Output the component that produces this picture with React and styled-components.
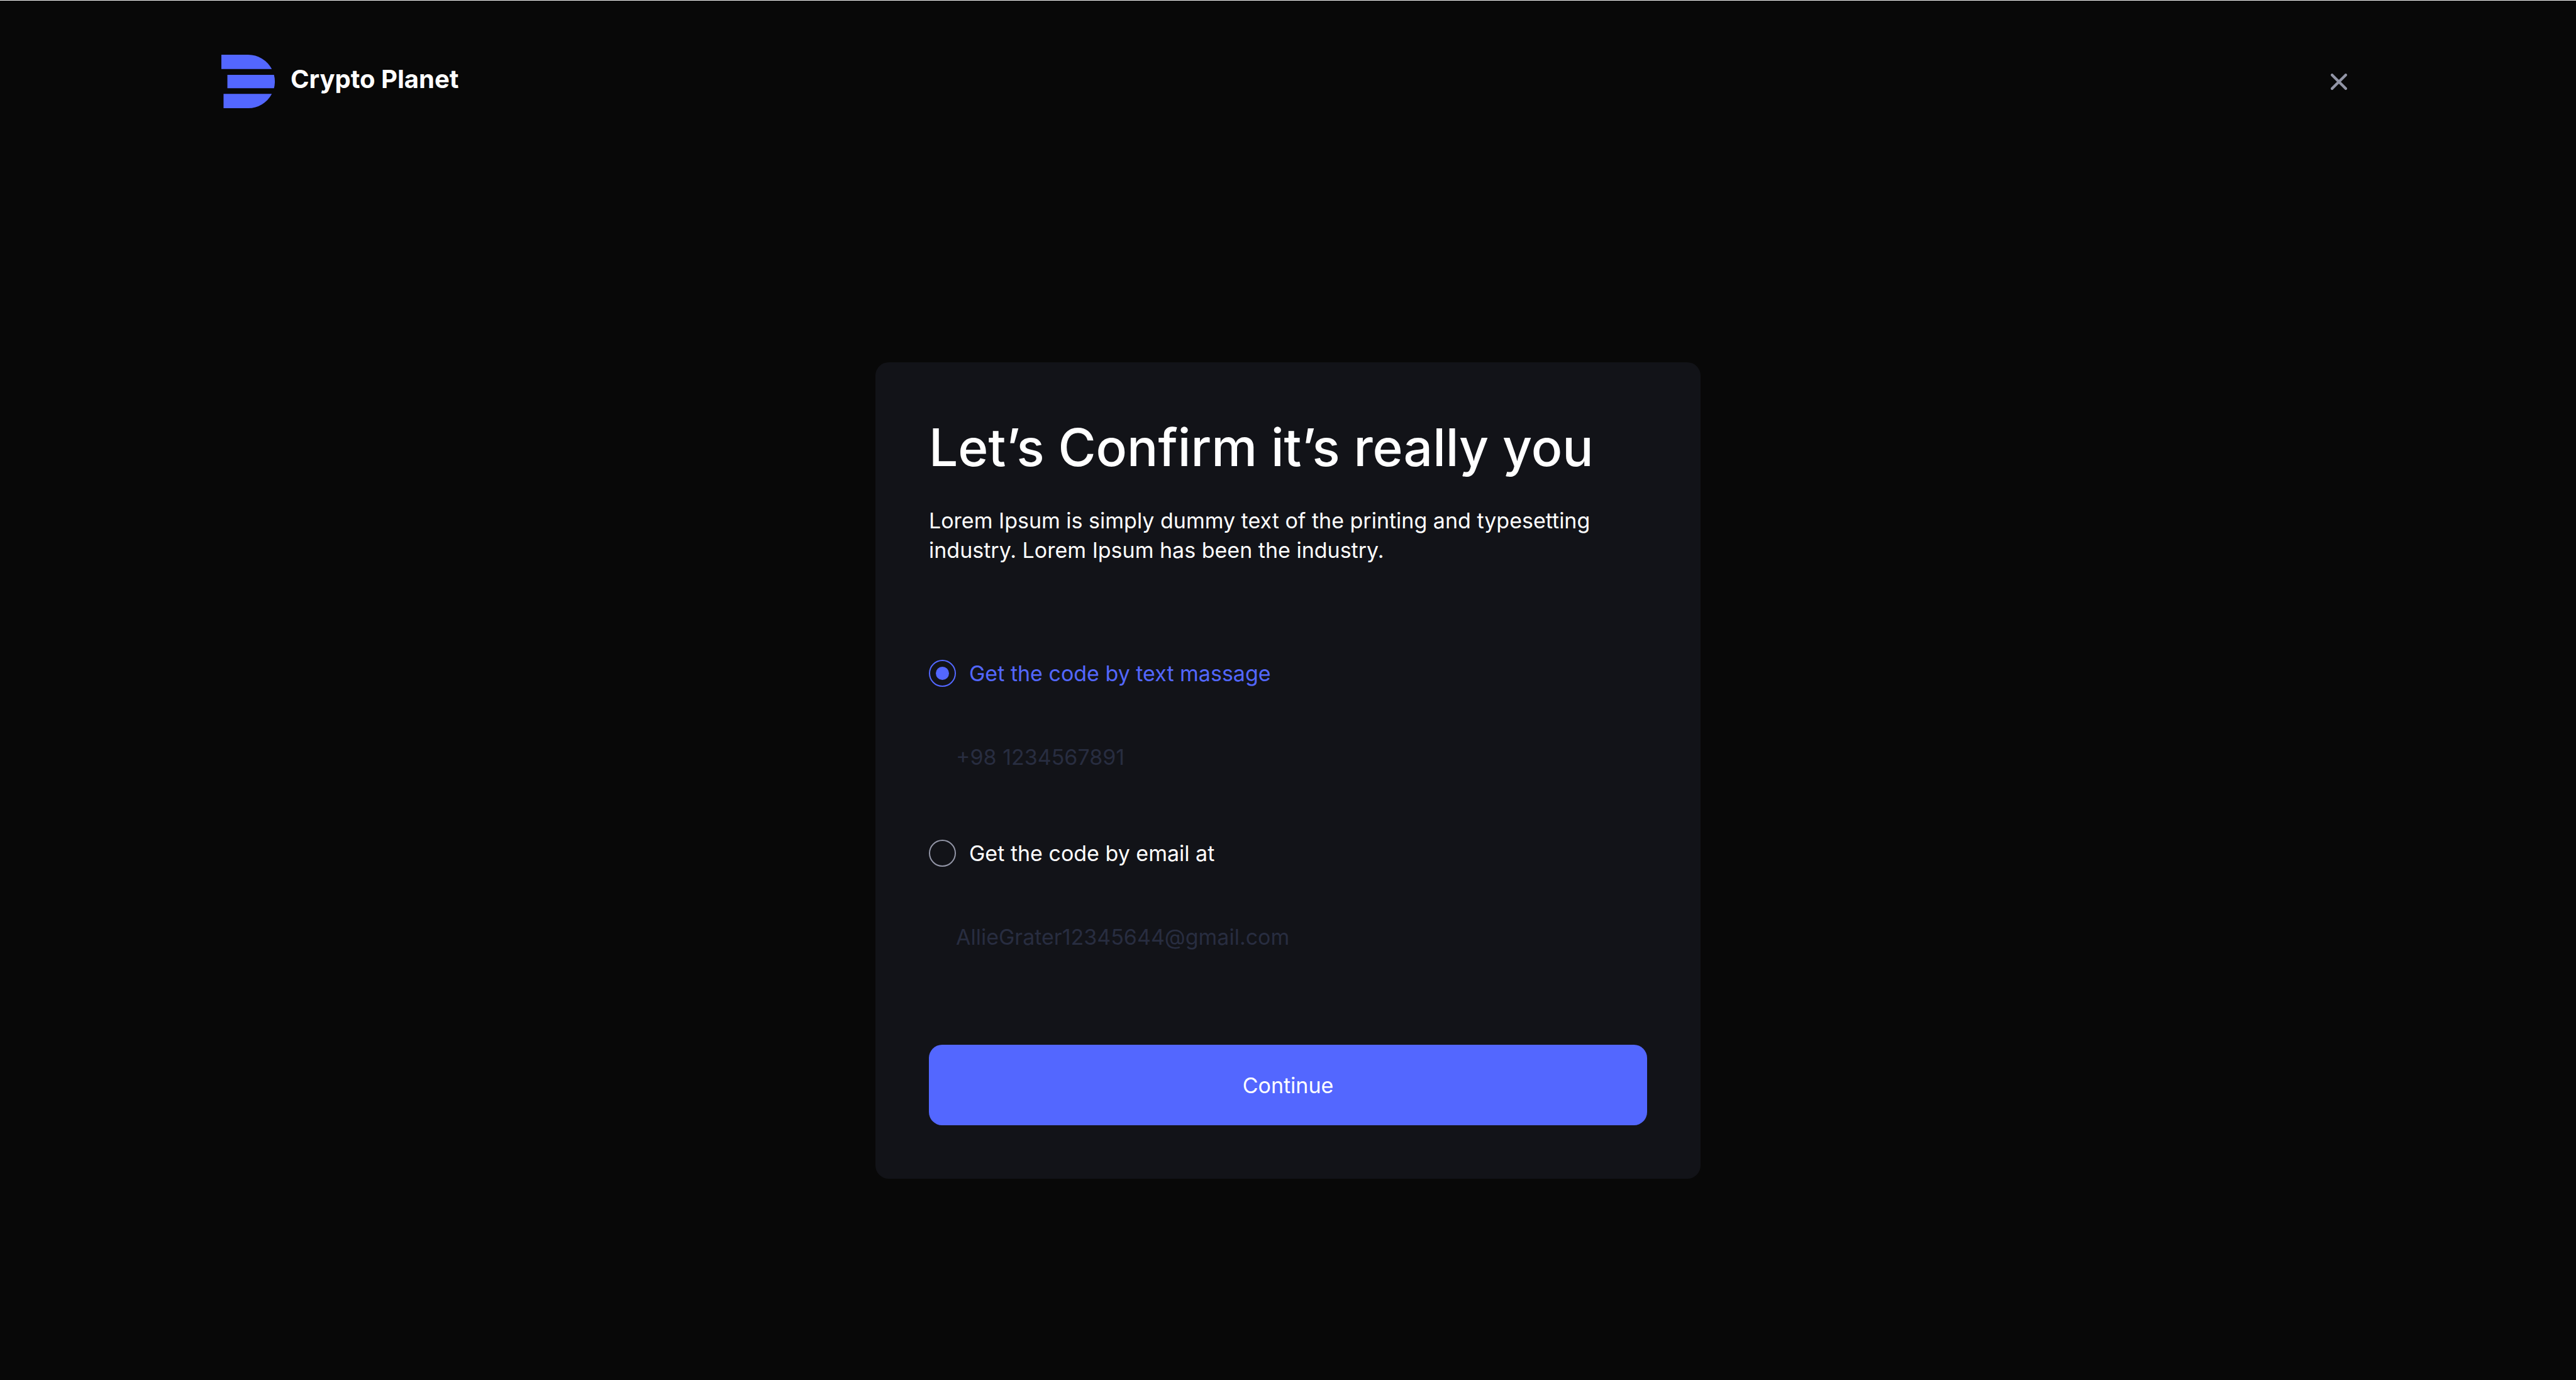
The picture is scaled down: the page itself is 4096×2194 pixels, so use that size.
import React, { useState } from "react";
import styled, { createGlobalStyle } from "styled-components";

const color = {
  page: "#080808",
  card: "#121318",
  accent: "#5367ff",
  text: "#ffffff",
  muted: "#9295a6",
  faint: "#282d40",
  edge: "#f4f4f4",
};

const GlobalStyle = createGlobalStyle`
  *, *::before, *::after { box-sizing: border-box; }
  html, body { margin: 0; background: ${color.page}; }
  body, button, input {
    font-family: Inter, "Liberation Sans", sans-serif;
    font-size: 34px;
    line-height: 47px;
    color: ${color.text};
  }
`;

const Page = styled.div`
  min-height: 100vh;
  display: flex;
  flex-direction: column;
  background: ${color.page};
  border-top: 1px solid ${color.edge};
`;

const Header = styled.header`
  display: flex;
  align-items: center;
  justify-content: space-between;
  padding: 86px 352px 84px;
`;

const Brand = styled.a`
  display: flex;
  align-items: center;
  gap: 25px;
  color: ${color.text};
  text-decoration: none;
`;

const LogoMark = styled.svg`
  display: block;
  width: 85px;
  height: 85px;
  fill: ${color.accent};
`;

const BrandName = styled.span`
  padding-bottom: 8px;
  font-size: 40px;
  font-weight: 700;
`;

const CloseButton = styled.button`
  display: grid;
  place-items: center;
  width: 51px;
  height: 51px;
  padding: 0;
  border: 0;
  background: none;
  cursor: pointer;

  svg {
    width: 26px;
    height: 26px;
    stroke: ${color.muted};
    stroke-width: 8;
    stroke-linecap: round;
  }
`;

const Main = styled.main`
  flex: 1;
  display: flex;
  align-items: center;
  justify-content: center;
`;

const Card = styled.form`
  display: flex;
  flex-direction: column;
  width: 100%;
  max-width: 1312px;
  padding: 85px;
  border-radius: 21px;
  background: ${color.card};
`;

const Title = styled.h1`
  margin: 0 0 41px;
  font-size: 82px;
  font-weight: 500;
  line-height: 102px;
`;

const Intro = styled.p`
  margin: 0 0 151px;
`;

const Options = styled.div`
  display: flex;
  flex-direction: column;
  gap: 68px;
  margin-bottom: 108px;
`;

const Option = styled.div`
  display: flex;
  flex-direction: column;
  gap: 47px;
`;

const Choice = styled.label`
  display: flex;
  align-items: center;
  gap: 21px;
  height: 43px;
  color: ${(p) => (p.$active ? color.accent : color.text)};
  cursor: pointer;
`;

const Radio = styled.input`
  appearance: none;
  display: grid;
  place-items: center;
  width: 43px;
  height: 43px;
  margin: 0;
  border: 2px solid ${color.muted};
  border-radius: 50%;

  &:checked {
    border-color: ${color.accent};
  }

  &:checked::before {
    content: "";
    width: 21px;
    height: 21px;
    border-radius: 50%;
    background: ${color.accent};
  }
`;

const Field = styled.input`
  width: 100%;
  height: 128px;
  padding: 0 43px;
  border: 0;
  border-radius: 21px;
  background: transparent;
  outline: none;

  &::placeholder {
    color: ${color.faint};
    opacity: 1;
  }
`;

const Submit = styled.button`
  height: 128px;
  border: 0;
  border-radius: 21px;
  background: ${color.accent};
  cursor: pointer;
`;

const methods = [
  { id: "text", label: "Get the code by text massage", type: "tel", hint: "+98 1234567891" },
  { id: "email", label: "Get the code by email at", type: "email", hint: "AllieGrater12345644@gmail.com" },
];

export default function App() {
  const [method, setMethod] = useState("text");

  return (
    <>
      <GlobalStyle />
      <Page>
        <Header>
          <Brand href="#">
            <LogoMark viewBox="0 0 160 160" aria-hidden="true">
              <path d="M0 0H80A80 80 0 0 1 151 43H0Z" />
              <path d="M18 60.3H157.5A80 80 0 0 1 157.5 100H18Z" />
              <path d="M6.5 117.3H151A80 80 0 0 1 80 160H6.5Z" />
            </LogoMark>
            <BrandName>Crypto Planet</BrandName>
          </Brand>
          <CloseButton type="button" aria-label="Close">
            <svg viewBox="0 0 48 48" aria-hidden="true">
              <path d="M4 4L44 44M44 4L4 44" />
            </svg>
          </CloseButton>
        </Header>
        <Main>
          <Card onSubmit={(e) => e.preventDefault()}>
            <Title>Let’s Confirm it’s really you</Title>
            <Intro>
              Lorem Ipsum is simply dummy text of the printing and typesetting
              industry. Lorem Ipsum has been the industry.
            </Intro>
            <Options role="radiogroup" aria-label="Delivery method">
              {methods.map((m) => (
                <Option key={m.id}>
                  <Choice $active={method === m.id} htmlFor={`choice-${m.id}`}>
                    <Radio
                      type="radio"
                      name="method"
                      id={`choice-${m.id}`}
                      checked={method === m.id}
                      onChange={() => setMethod(m.id)}
                    />
                    {m.label}
                  </Choice>
                  <Field type={m.type} placeholder={m.hint} aria-label={m.label} />
                </Option>
              ))}
            </Options>
            <Submit type="submit">Continue</Submit>
          </Card>
        </Main>
      </Page>
    </>
  );
}
